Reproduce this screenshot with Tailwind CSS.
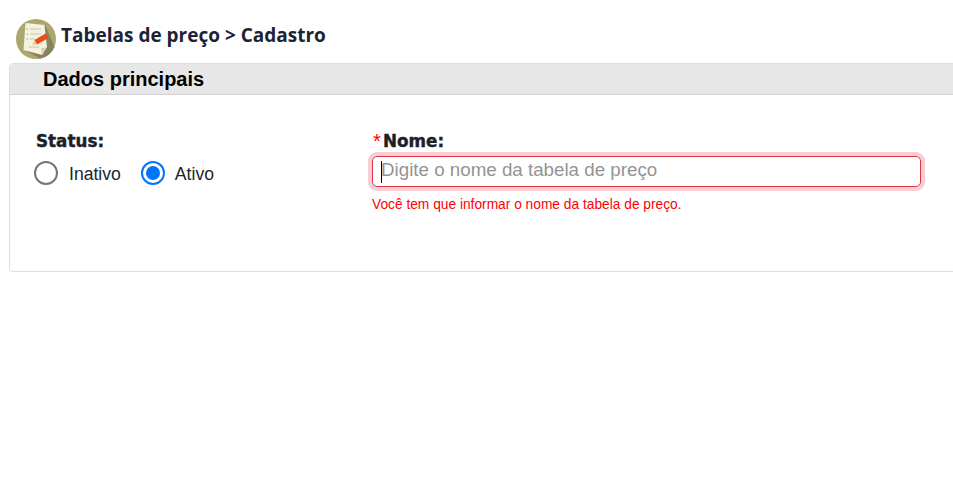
<!DOCTYPE html>
<html lang="pt"><head><meta charset="utf-8"><script src="https://cdn.jsdelivr.net/npm/@tailwindcss/browser@4"></script></head>
<body class="bg-white overflow-hidden font-['Liberation_Sans',sans-serif] text-[#212529]">
<div class="w-[953px] h-[500px] overflow-hidden pl-[9px]">
  <header class="flex items-center pt-[19px] pl-[7px]">
    <svg class="w-[40px] h-[40px] shrink-0" viewBox="0 0 40 40">
      <circle cx="20" cy="20" r="20" fill="#aba76d"/>
      <path d="M9 31 L29 6 L38.500 28 A20 20 0 0 1 24 39.600 Z" fill="#86835c"/>
      <path d="M9.500 4 L28.500 6 L31 28 L26 36 L7.500 31 Z" fill="#f5f2df"/>
      <path d="M26 36 L25 29.500 L31 28 Z" fill="#d5d1b8"/>
      <path d="M14 10 H25 M14 15 H25 M14 20 H19 M13 28 H23" stroke="#d5d3c4" stroke-width="1.500"/>
      <path d="M10.500 10 H12 M10.500 15 H12 M10.500 20 H12" stroke="#b9b8a6" stroke-width="1.500"/>
      <path d="M18.500 21 L29.500 14.500 L32.500 19 L21 25.500 Z" fill="#ea4a1c"/>
      <path d="M18.500 21 L21 25.500 L16.500 26 Z" fill="#f0c27a"/>
    </svg>
    <h1 class="ml-[5px] font-['Open_Sans',sans-serif] font-bold text-[19px] leading-none text-[#1c2333] -mt-[7px]">Tabelas de preço &gt; Cadastro</h1>
  </header>
  <section class="mt-[4px] h-[209px] w-[960px] border border-[#dedede] rounded-[4px]">
    <h2 class="h-[31px] bg-[#e7e7e7] border-b border-[#d2d2d2] pl-[33px] font-bold text-[20px] leading-[30px] text-black rounded-t-[3px]">Dados principais</h2>
    <div class="flex pt-[35px] pl-[26px]">
      <div class="w-[336px]">
        <p class="font-['DejaVu_Sans',sans-serif] font-bold text-[16.8px] leading-[22px] text-[#1c2128] [-webkit-text-stroke:0.4px_#1c2128]">Status:</p>
        <div class="flex items-center mt-[8px] -ml-[2px] text-[17.6px] leading-[26px]">
          <span class="w-[24px] h-[24px] rounded-full border-2 border-[#767676]"></span>
          <span class="ml-[11px] translate-y-[1px]">Inativo</span>
          <span class="ml-[20px] w-[24px] h-[24px] rounded-full border-2 border-[#0075ff] flex items-center justify-center"><span class="w-[14px] h-[14px] rounded-full bg-[#0075ff]"></span></span>
          <span class="ml-[10px] translate-y-[1px]">Ativo</span>
        </div>
      </div>
      <div class="w-[549px]">
        <p class="font-['DejaVu_Sans',sans-serif] font-bold text-[16.8px] leading-[22px] text-[#1c2128] [-webkit-text-stroke:0.4px_#1c2128] flex items-center"><span class="font-['Liberation_Sans',sans-serif] text-[#ff0000] font-normal text-[20px] ml-[1px] w-[10px] [-webkit-text-stroke:0px]">*</span>Nome:</p>
        <div class="mt-[4px] h-[31px] rounded-[5px] border border-[#dc3545] ring-[4px] ring-[#f9cdd1] flex items-center pl-[8px] text-[18.75px] text-[#949494]"><span class="w-px h-[22px] bg-black"></span><span class="-ml-px -translate-y-[1px]">Digite o nome da tabela de preço</span></div>
        <p class="mt-[10px] text-[13.75px] leading-[16px] text-[#ff0000]">Você tem que informar o nome da tabela de preço.</p>
      </div>
    </div>
  </section>
</div>
</body></html>
